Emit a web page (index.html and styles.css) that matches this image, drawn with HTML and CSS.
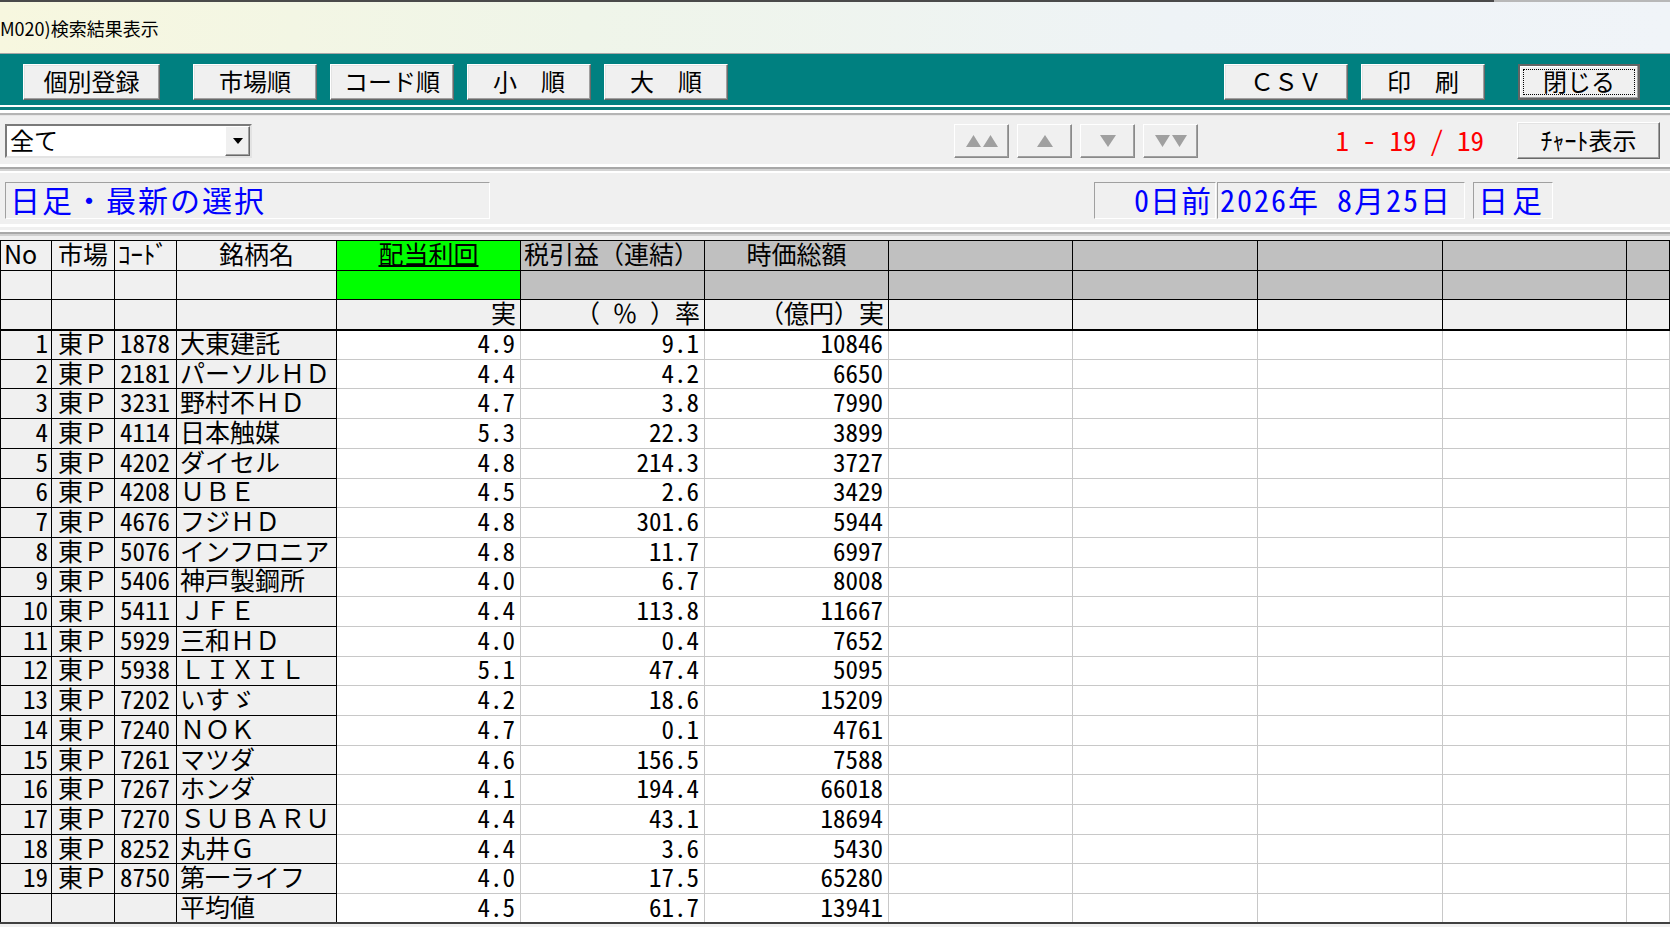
FILE: index.html
```html
<!DOCTYPE html>
<html lang="ja">
<head>
  <meta charset="UTF-8" />
  <title>M020)検索結果表示</title>
  <link rel="stylesheet" href="styles.css">
</head>
<body>

  <!-- Title -->
  <div class="titlebar">M020)検索結果表示</div>

  <!-- Toolbar -->
  <div class="toolbar">
    <button class="btn btn-reg">個別登録</button>
    <button class="btn gap-wide">市場順</button>
    <button class="btn gap">コード順</button>
    <button class="btn gap">小　順</button>
    <button class="btn gap">大　順</button>
    <button class="btn push">ＣＳＶ</button>
    <button class="btn gap">印　刷</button>
    <button class="btn btn-default gap-wide"><span class="focus">閉じる</span></button>
  </div>
  <div class="sep sep-toolbar"></div>

  <!-- Filter / paging -->
  <div class="filterbar">
    <div class="combo">
      <span class="combo-text">全て</span>
      <span class="combo-arrow">
        <svg width="10" height="6" viewBox="0 0 10 6"><path d="M0 0H10L5 6Z" fill="#000"/></svg>
      </span>
    </div>
    <div class="nav">
      <button class="nav-btn">
        <svg width="32" height="12" viewBox="0 0 32 12"><path d="M0 12L7.5 0L15 12ZM17 12L24.5 0L32 12Z" fill="#a0a0a0"/></svg>
      </button>
      <button class="nav-btn">
        <svg width="16" height="12" viewBox="0 0 16 12"><path d="M0 12L8 0L16 12Z" fill="#a0a0a0"/></svg>
      </button>
      <button class="nav-btn">
        <svg width="16" height="12" viewBox="0 0 16 12"><path d="M0 0H16L8 12Z" fill="#a0a0a0"/></svg>
      </button>
      <button class="nav-btn">
        <svg width="32" height="12" viewBox="0 0 32 12"><path d="M0 0H15L7.5 12ZM17 0H32L24.5 12Z" fill="#a0a0a0"/></svg>
      </button>
    </div>
    <div class="count">1 - 19 / 19</div>
    <button class="btn btn-chart">ﾁｬｰﾄ表示</button>
  </div>
  <div class="sep sep-filter"></div>

  <!-- Selection info -->
  <div class="infobar">
    <div class="field field-title">日足・最新の選択</div>
    <div class="field field-ago">0日前</div>
    <div class="field field-date">2026年 8月25日</div>
    <div class="field field-span">日足</div>
  </div>
  <div class="sep sep-info"></div>

  <!-- Result grid -->
  <table class="grid">
    <colgroup>
      <col style="width:51px"><col style="width:63px"><col style="width:62px"><col style="width:160px">
      <col style="width:184px"><col style="width:184px"><col style="width:184px"><col style="width:184px">
      <col style="width:185px"><col style="width:185px"><col style="width:184px"><col>
    </colgroup>
    <thead>
      <tr>
        <th class="left">No</th>
        <th class="left pad">市場</th>
        <th class="left">ｺｰﾄﾞ</th>
        <th>銘柄名</th>
        <th class="green"><span class="sorted">配当利回</span></th>
        <th class="gray left">税引益（連結）</th>
        <th class="gray">時価総額</th>
        <th class="gray"></th><th class="gray"></th><th class="gray"></th><th class="gray"></th><th class="gray"></th>
      </tr>
      <tr>
        <th></th><th></th><th></th><th></th>
        <th class="green"></th>
        <th class="gray"></th><th class="gray"></th>
        <th class="gray"></th><th class="gray"></th><th class="gray"></th><th class="gray"></th><th class="gray"></th>
      </tr>
      <tr class="units">
        <th></th><th></th><th></th><th></th>
        <th class="right">実</th>
        <th class="right">（&ensp;％&ensp;）率</th>
        <th class="right">（億円）実</th>
        <th></th><th></th><th></th><th></th><th></th>
      </tr>
    </thead>
    <tbody>
      <tr><td class="no">1</td><td class="mk">東Ｐ</td><td class="cd">1878</td><td class="nm">大東建託</td><td class="v">4.9</td><td class="v">9.1</td><td class="v">10846</td><td></td><td></td><td></td><td></td><td></td></tr>
      <tr><td class="no">2</td><td class="mk">東Ｐ</td><td class="cd">2181</td><td class="nm">パーソルＨＤ</td><td class="v">4.4</td><td class="v">4.2</td><td class="v">6650</td><td></td><td></td><td></td><td></td><td></td></tr>
      <tr><td class="no">3</td><td class="mk">東Ｐ</td><td class="cd">3231</td><td class="nm">野村不ＨＤ</td><td class="v">4.7</td><td class="v">3.8</td><td class="v">7990</td><td></td><td></td><td></td><td></td><td></td></tr>
      <tr><td class="no">4</td><td class="mk">東Ｐ</td><td class="cd">4114</td><td class="nm">日本触媒</td><td class="v">5.3</td><td class="v">22.3</td><td class="v">3899</td><td></td><td></td><td></td><td></td><td></td></tr>
      <tr><td class="no">5</td><td class="mk">東Ｐ</td><td class="cd">4202</td><td class="nm">ダイセル</td><td class="v">4.8</td><td class="v">214.3</td><td class="v">3727</td><td></td><td></td><td></td><td></td><td></td></tr>
      <tr><td class="no">6</td><td class="mk">東Ｐ</td><td class="cd">4208</td><td class="nm">ＵＢＥ</td><td class="v">4.5</td><td class="v">2.6</td><td class="v">3429</td><td></td><td></td><td></td><td></td><td></td></tr>
      <tr><td class="no">7</td><td class="mk">東Ｐ</td><td class="cd">4676</td><td class="nm">フジＨＤ</td><td class="v">4.8</td><td class="v">301.6</td><td class="v">5944</td><td></td><td></td><td></td><td></td><td></td></tr>
      <tr><td class="no">8</td><td class="mk">東Ｐ</td><td class="cd">5076</td><td class="nm">インフロニア</td><td class="v">4.8</td><td class="v">11.7</td><td class="v">6997</td><td></td><td></td><td></td><td></td><td></td></tr>
      <tr><td class="no">9</td><td class="mk">東Ｐ</td><td class="cd">5406</td><td class="nm">神戸製鋼所</td><td class="v">4.0</td><td class="v">6.7</td><td class="v">8008</td><td></td><td></td><td></td><td></td><td></td></tr>
      <tr><td class="no">10</td><td class="mk">東Ｐ</td><td class="cd">5411</td><td class="nm">ＪＦＥ</td><td class="v">4.4</td><td class="v">113.8</td><td class="v">11667</td><td></td><td></td><td></td><td></td><td></td></tr>
      <tr><td class="no">11</td><td class="mk">東Ｐ</td><td class="cd">5929</td><td class="nm">三和ＨＤ</td><td class="v">4.0</td><td class="v">0.4</td><td class="v">7652</td><td></td><td></td><td></td><td></td><td></td></tr>
      <tr><td class="no">12</td><td class="mk">東Ｐ</td><td class="cd">5938</td><td class="nm">ＬＩＸＩＬ</td><td class="v">5.1</td><td class="v">47.4</td><td class="v">5095</td><td></td><td></td><td></td><td></td><td></td></tr>
      <tr><td class="no">13</td><td class="mk">東Ｐ</td><td class="cd">7202</td><td class="nm">いすゞ</td><td class="v">4.2</td><td class="v">18.6</td><td class="v">15209</td><td></td><td></td><td></td><td></td><td></td></tr>
      <tr><td class="no">14</td><td class="mk">東Ｐ</td><td class="cd">7240</td><td class="nm">ＮＯＫ</td><td class="v">4.7</td><td class="v">0.1</td><td class="v">4761</td><td></td><td></td><td></td><td></td><td></td></tr>
      <tr><td class="no">15</td><td class="mk">東Ｐ</td><td class="cd">7261</td><td class="nm">マツダ</td><td class="v">4.6</td><td class="v">156.5</td><td class="v">7588</td><td></td><td></td><td></td><td></td><td></td></tr>
      <tr><td class="no">16</td><td class="mk">東Ｐ</td><td class="cd">7267</td><td class="nm">ホンダ</td><td class="v">4.1</td><td class="v">194.4</td><td class="v">66018</td><td></td><td></td><td></td><td></td><td></td></tr>
      <tr><td class="no">17</td><td class="mk">東Ｐ</td><td class="cd">7270</td><td class="nm">ＳＵＢＡＲＵ</td><td class="v">4.4</td><td class="v">43.1</td><td class="v">18694</td><td></td><td></td><td></td><td></td><td></td></tr>
      <tr><td class="no">18</td><td class="mk">東Ｐ</td><td class="cd">8252</td><td class="nm">丸井Ｇ</td><td class="v">4.4</td><td class="v">3.6</td><td class="v">5430</td><td></td><td></td><td></td><td></td><td></td></tr>
      <tr><td class="no">19</td><td class="mk">東Ｐ</td><td class="cd">8750</td><td class="nm">第一ライフ</td><td class="v">4.0</td><td class="v">17.5</td><td class="v">65280</td><td></td><td></td><td></td><td></td><td></td></tr>
      <tr><td class="no"></td><td class="mk"></td><td class="cd"></td><td class="nm">平均値</td><td class="v">4.5</td><td class="v">61.7</td><td class="v">13941</td><td></td><td></td><td></td><td></td><td></td></tr>
    </tbody>
  </table>

</body>
</html>
```

FILE: styles.css
```css
* {
  box-sizing: border-box;
}

body {
  margin: 0;
  width: 1670px;
  height: 927px;
  overflow: hidden;
  background-color: #f0f0f0;
  font-family: "Noto Sans CJK JP", "Noto Sans", sans-serif;
  color: #000;
}

/* Title bar */
.titlebar {
  height: 54px;
  padding-top: 2px;
  display: flex;
  align-items: center;
  font-size: 18px;
  border-bottom: 1px solid #a6a6a6;
  background:
    linear-gradient(to right, #4a4a4a 1494px, #b8b8b8 1494px) top / 100% 2px no-repeat,
    linear-gradient(to right, #f7f7df 0%, #eff5e9 35%, #eef3f6 70%, #f0f4f8 100%);
}

/* Toolbar */
.toolbar {
  height: 51px;
  display: flex;
  align-items: flex-start;
  padding: 10px 30px 0 23px;
  background-color: #008080;
}

.btn {
  height: 36px;
  width: 124px;
  padding: 0 0 2px;
  display: flex;
  align-items: center;
  justify-content: center;
  font-family: inherit;
  font-size: 24px;
  line-height: 1;
  color: #000;
  background-color: #f0f0f0;
  border: 1px solid;
  border-color: #fff #696969 #696969 #fff;
  box-shadow: inset -1px -1px #a0a0a0, inset 1px 1px #e3e3e3;
  white-space: nowrap;
}

.btn-reg {
  width: 137px;
}

.gap {
  margin-left: 13px;
}

.gap-wide {
  margin-left: 33px;
}

.push {
  margin-left: auto;
}

.btn-default {
  width: 122px;
  border: 2px solid #646464;
  box-shadow: inset -1px -1px #a0a0a0, inset 1px 1px #fff;
  padding: 3px;
}

.btn-default .focus {
  flex: 1;
  height: 100%;
  display: flex;
  align-items: center;
  justify-content: center;
  border: 1px dotted #000;
  padding-bottom: 2px;
}

/* Separators */
.sep {
  height: 12px;
}

.sep-toolbar {
  background: linear-gradient(to bottom, #fff 0 2px, #0a7d7d 2px 5px, #fff 5px 8px, #b4b4b4 8px 10px, #e6e6e6 10px 11px, #f0f0f0 11px);
}

.sep-filter {
  height: 16px;
  background: linear-gradient(to bottom, #fff 0 3px, #a8a8a8 3px 5px, #d4d4d4 5px 7px, #fff 7px 9px, #f0f0f0 9px);
}

.sep-info {
  height: 16px;
  background: linear-gradient(to bottom, #fff 0 3px, #f0f0f0 3px 6px, #fff 6px 8px, #a8a8a8 8px 10px, #d0d0d0 10px 12px, #f0f0f0 12px);
}

/* Filter bar */
.filterbar {
  height: 47px;
  display: flex;
  align-items: center;
  padding: 0 10px 0 5px;
}

.combo {
  width: 247px;
  height: 34px;
  display: flex;
  align-items: center;
  background-color: #fff;
  border: 2px solid;
  border-color: #7a7a7a #e3e3e3 #e3e3e3 #7a7a7a;
  margin-right: auto;
}

.combo-text {
  flex: 1;
  font-size: 24px;
  line-height: 1;
  padding: 0 0 2px 3px;
}

.combo-arrow {
  width: 25px;
  height: 30px;
  display: flex;
  align-items: center;
  justify-content: center;
  background-color: #f0f0f0;
  border: 1px solid;
  border-color: #fff #696969 #696969 #fff;
  box-shadow: inset -1px -1px #a0a0a0;
}

.nav {
  display: flex;
  gap: 8px;
}

.nav-btn {
  width: 55px;
  height: 34px;
  padding: 0;
  display: flex;
  align-items: center;
  justify-content: center;
  background-color: #f0f0f0;
  border: 1px solid;
  border-color: #fff #8a8a8a #8a8a8a #fff;
  box-shadow: inset -1px -1px #a0a0a0;
}

.count {
  width: 286px;
  text-align: right;
  font-size: 27px;
  line-height: 1;
  color: #ff0000;
  padding-bottom: 3px;
  font-feature-settings: "hwid" 1;
}

.btn-chart {
  width: 143px;
  height: 37px;
  margin-left: 33px;
}

/* Info bar */
.infobar {
  height: 44px;
  display: flex;
  align-items: flex-start;
  padding: 2px 117px 0 5px;
}

.field {
  height: 37px;
  display: flex;
  align-items: center;
  padding-bottom: 3px;
  font-size: 30px;
  line-height: 1;
  color: #0000ff;
  border: 1px solid;
  border-color: #a0a0a0 #fff #fff #a0a0a0;
  font-feature-settings: "hwid" 1;
  white-space: nowrap;
}

.field-title {
  width: 485px;
  padding-left: 4px;
  letter-spacing: 2px;
  margin-right: auto;
}

.field-ago {
  width: 122px;
  justify-content: flex-end;
  padding-right: 3px;
  letter-spacing: 1px;
}

.field-date {
  width: 248px;
  margin-left: 1px;
  padding-left: 2px;
  letter-spacing: 2px;
}

.field-span {
  width: 80px;
  margin-left: 8px;
  padding-left: 4px;
  letter-spacing: 4px;
}

/* Grid */
.grid {
  width: 1670px;
  table-layout: fixed;
  border-collapse: collapse;
  border-bottom: 2px solid #404040;
}

.grid tr {
  height: 29.7px;
}

.grid th,
.grid td {
  padding: 0 0 5px;
  font-size: 25px;
  font-weight: normal;
  line-height: 20px;
  white-space: nowrap;
  overflow: hidden;
}

.grid th {
  border: 1px solid #000;
  background-color: #f0f0f0;
  text-align: center;
}

.grid th.left {
  text-align: left;
  padding-left: 3px;
}

.grid th.pad {
  padding-left: 6px;
}

.grid th.right {
  text-align: right;
  padding-right: 4px;
}

.grid th.green {
  background-color: #00ff00;
}

.grid th.gray {
  background-color: #c0c0c0;
}

.grid .units th {
  border-bottom: 2px solid #000;
}

.sorted {
  text-decoration: underline;
  text-underline-offset: 1px;
}

.grid td {
  border: 1px solid #c8c8c8;
  background-color: #fff;
}

.grid td.no,
.grid td.mk,
.grid td.cd,
.grid td.nm {
  border-color: #000;
  background-color: #f0f0f0;
}

.grid td.no {
  text-align: right;
  padding-right: 3px;
  font-feature-settings: "hwid" 1;
}

.grid td.mk {
  padding-left: 6px;
}

.grid td.cd {
  padding-left: 5px;
  font-feature-settings: "hwid" 1;
}

.grid td.nm {
  padding-left: 3px;
}

.grid td.v {
  text-align: right;
  padding-right: 5px;
  font-feature-settings: "hwid" 1;
}
```
